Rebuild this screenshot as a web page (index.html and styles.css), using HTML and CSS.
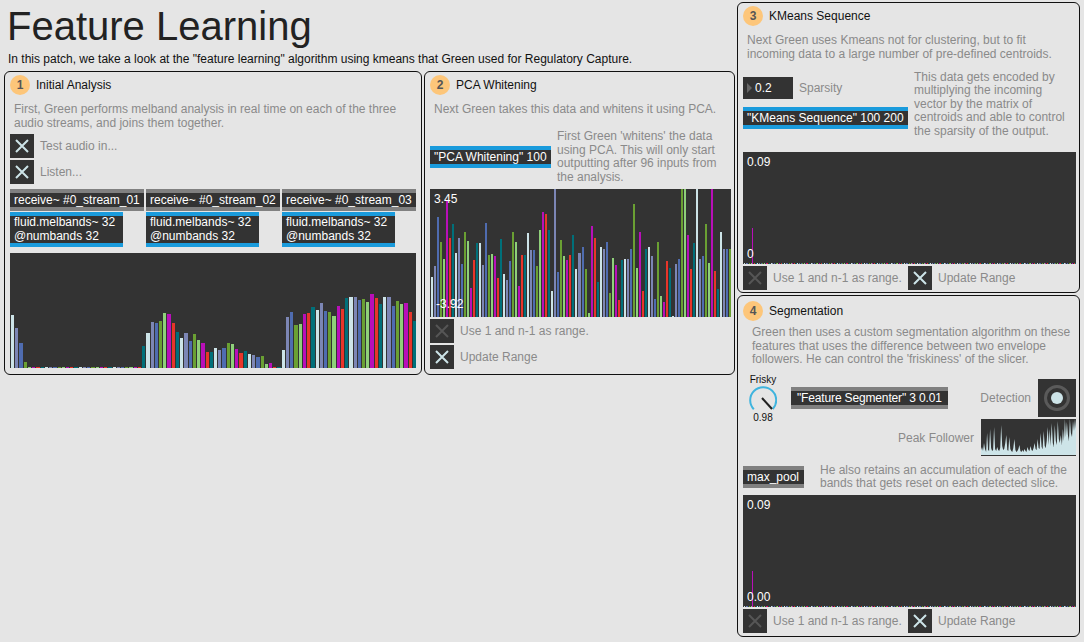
FILE: index.html
```html
<!DOCTYPE html>
<html lang="en">
<head>
    <meta charset="UTF-8">
    <meta name="viewport" content="width=device-width, initial-scale=1.0">
    <title>Feature Learning</title>
    <link rel="stylesheet" href="styles.css">
</head>
<body>
<div class="patch">
    <div class="left">
        <h1>Feature Learning</h1>
        <p class="intro">In this patch, we take a look at the "feature learning" algorithm using kmeans that Green used for Regulatory Capture.</p>

        <div class="panels">
            <section class="panel panel-analysis">
                <div class="head"><span class="badge">1</span>Initial Analysis</div>
                <p class="desc">First, Green performs melband analysis in real time on each of the three<br>audio streams, and joins them together.</p>
                <div class="toggle-row first">
                    <span class="toggle"><svg viewBox="0 0 24 24"><path d="M6 6L18 18M18 6L6 18"/></svg></span>
                    <span class="label">Test audio in...</span>
                </div>
                <div class="toggle-row">
                    <span class="toggle"><svg viewBox="0 0 24 24"><path d="M6 6L18 18M18 6L6 18"/></svg></span>
                    <span class="label">Listen...</span>
                </div>
                <div class="streams">
                    <div class="stream">
                        <div class="obj grey">receive~ #0_stream_01</div>
                        <div class="obj blue mel">fluid.melbands~ 32 @numbands 32</div>
                    </div>
                    <div class="stream">
                        <div class="obj grey">receive~ #0_stream_02</div>
                        <div class="obj blue mel">fluid.melbands~ 32 @numbands 32</div>
                    </div>
                    <div class="stream">
                        <div class="obj grey">receive~ #0_stream_03</div>
                        <div class="obj blue mel">fluid.melbands~ 32 @numbands 32</div>
                    </div>
                </div>
                <div class="chart chart-mel"><svg id="melChart"></svg></div>
            </section>

            <section class="panel panel-pca">
                <div class="head"><span class="badge">2</span>PCA Whitening</div>
                <p class="desc">Next Green takes this data and whitens it using PCA.</p>
                <div class="pca-row">
                    <div class="obj blue pca-msg">"PCA Whitening" 100</div>
                    <p class="note">First Green 'whitens' the data using PCA. This will only start outputting after 96 inputs from the analysis.</p>
                </div>
                <div class="chart chart-pca">
                    <svg id="pcaChart"></svg>
                    <span class="val val-top">3.45</span>
                    <span class="val val-low">-3.92</span>
                </div>
                <div class="toggle-row">
                    <span class="toggle off"><svg viewBox="0 0 24 24"><path d="M6 6L18 18M18 6L6 18"/></svg></span>
                    <span class="label">Use 1 and n-1 as range.</span>
                </div>
                <div class="toggle-row">
                    <span class="toggle"><svg viewBox="0 0 24 24"><path d="M6 6L18 18M18 6L6 18"/></svg></span>
                    <span class="label">Update Range</span>
                </div>
            </section>
        </div>
    </div>

    <div class="right">
        <section class="panel panel-kmeans">
            <div class="head"><span class="badge">3</span>KMeans Sequence</div>
            <p class="desc">Next Green uses Kmeans not for clustering, but to fit<br>incoming data to a large number of pre-defined centroids.</p>
            <div class="kmeans-row">
                <div class="kmeans-controls">
                    <div class="sparsity">
                        <span class="numbox"><i class="arrow"></i>0.2</span>
                        <span class="label">Sparsity</span>
                    </div>
                    <div class="obj blue">"KMeans Sequence" 100 200</div>
                </div>
                <p class="note">This data gets encoded by multiplying the incoming vector by the matrix of centroids and able to control the sparsity of the output.</p>
            </div>
            <div class="chart chart-seq">
                <svg id="seqChart"></svg>
                <span class="val val-top">0.09</span>
                <span class="val val-bottom">0</span>
            </div>
            <div class="range-row">
                <div class="toggle-row range-use">
                    <span class="toggle off"><svg viewBox="0 0 24 24"><path d="M6 6L18 18M18 6L6 18"/></svg></span>
                    <span class="label">Use 1 and n-1 as range.</span>
                </div>
                <div class="toggle-row">
                    <span class="toggle"><svg viewBox="0 0 24 24"><path d="M6 6L18 18M18 6L6 18"/></svg></span>
                    <span class="label">Update Range</span>
                </div>
            </div>
        </section>

        <section class="panel panel-seg">
            <div class="head"><span class="badge">4</span>Segmentation</div>
            <p class="desc seg-desc">Green then uses a custom segmentation algorithm on these<br>features that uses the difference between two envelope<br>followers. He can control the 'friskiness' of the slicer.</p>
            <div class="seg-mid">
                <div class="knob">
                    <span class="knob-name">Frisky</span>
                    <svg viewBox="0 0 28 26" width="28" height="26">
                        <path class="knob-arc" d="M4.8 23.2A13 13 0 1 1 23.8 23"/>
                        <path class="knob-needle" d="M13 12L23 23"/>
                    </svg>
                    <span class="knob-val">0.98</span>
                </div>
                <div class="obj grey seg-msg">"Feature Segmenter" 3 0.01</div>
                <div class="seg-line detect-line">
                    <span class="label">Detection</span>
                    <span class="bang"><svg viewBox="0 0 38 38" width="38" height="38"><circle class="bang-ring" cx="19" cy="19" r="11.5"/><circle class="bang-dot" cx="19" cy="19" r="6"/></svg></span>
                </div>
                <div class="seg-line peak-line">
                    <span class="label">Peak Follower</span>
                    <div class="peak"><svg id="peakChart" viewBox="0 0 95 36" preserveAspectRatio="none"></svg></div>
                </div>
            </div>
            <div class="pool-row">
                <div class="obj grey pool">max_pool</div>
                <p class="note">He also retains an accumulation of each of the bands that gets reset on each detected slice.</p>
            </div>
            <div class="chart chart-seq">
                <svg id="poolChart"></svg>
                <span class="val val-top">0.09</span>
                <span class="val val-bottom">0.00</span>
            </div>
            <div class="range-row">
                <div class="toggle-row range-use">
                    <span class="toggle off"><svg viewBox="0 0 24 24"><path d="M6 6L18 18M18 6L6 18"/></svg></span>
                    <span class="label">Use 1 and n-1 as range.</span>
                </div>
                <div class="toggle-row">
                    <span class="toggle"><svg viewBox="0 0 24 24"><path d="M6 6L18 18M18 6L6 18"/></svg></span>
                    <span class="label">Update Range</span>
                </div>
            </div>
        </section>
    </div>
</div>

<script src="charts.js"></script>
</body>
</html>
```

FILE: styles.css
```css
* {
    box-sizing: border-box;
}
body {
    margin: 0;
    background-color: #e5e5e5;
    font-family: "Liberation Sans", Arial, sans-serif;
    font-size: 12px;
    color: #222;
    overflow: hidden;
}
p {
    margin: 0;
}
.patch {
    display: flex;
    gap: 2px;
    padding: 2px 0 0 4px;
    height: 642px;
}
.left {
    width: 731px;
}
.right {
    width: 343px;
    display: flex;
    flex-direction: column;
    gap: 2px;
}
h1 {
    margin: 1px 0 0 3px;
    font-size: 40px;
    font-weight: normal;
    line-height: 46px;
    color: #222;
}
.intro {
    margin: 3px 0 5px 4px;
    line-height: 14px;
    color: #111;
}
.panels {
    display: flex;
    gap: 2px;
}
.panel {
    border: 1px solid #111;
    border-radius: 6px;
    padding: 3px 3px 5px 5px;
}
.panel-analysis {
    width: 418px;
    padding-right: 5px;
}
.panel-pca {
    width: 311px;
}
.panel-kmeans {
    padding-bottom: 2px;
    height: 291px;
}
.panel-seg {
    padding-top: 5px;
    padding-bottom: 3px;
    height: 342px;
}
.head {
    display: flex;
    align-items: center;
    gap: 6px;
    height: 20px;
    color: #111;
}
.badge {
    width: 20px;
    height: 20px;
    border-radius: 50%;
    background-color: #fdc67a;
    color: #555;
    font-weight: bold;
    text-align: center;
    line-height: 20px;
}
.desc {
    margin: 8px 0 0 4px;
    line-height: 13.5px;
    color: #8a8a8a;
}
.seg-desc {
    margin: 5px 0 0 9px;
}
.note {
    line-height: 13.5px;
    color: #8a8a8a;
}
.label {
    color: #8a8a8a;
    white-space: nowrap;
}
.toggle-row {
    display: flex;
    align-items: center;
    gap: 6px;
    margin-top: 2px;
}
.toggle-row.first {
    margin-top: 4px;
}
.toggle {
    display: block;
    width: 24px;
    height: 24px;
    background-color: #333;
    flex: none;
}
.toggle svg {
    display: block;
    fill: none;
    stroke: #cde4e8;
    stroke-width: 2;
}
.toggle.off svg {
    stroke: #565656;
}
.obj {
    background-color: #333;
    color: #fff;
    border-top: 4px solid;
    border-bottom: 4px solid;
    padding: 0 4px;
    line-height: 14px;
    white-space: nowrap;
}
.obj.grey {
    border-color: #808080;
}
.obj.blue {
    border-color: #1a9bdc;
}
.streams {
    display: flex;
    gap: 2px;
    margin-top: 5px;
}
.stream {
    width: 134px;
    display: flex;
    flex-direction: column;
    gap: 1px;
}
.obj.mel {
    width: 113px;
    white-space: normal;
    line-height: 13.5px;
}
.chart {
    position: relative;
    background-color: #333;
}
.chart svg {
    display: block;
    width: 100%;
    height: 100%;
}
.chart-mel {
    height: 115px;
    margin-top: 6px;
}
.chart-pca {
    height: 128px;
    margin-top: 5px;
}
.chart-seq {
    height: 112px;
}
.val {
    position: absolute;
    left: 4px;
    color: #fff;
    line-height: 14px;
}
.val-top {
    top: 3px;
}
.val-bottom {
    bottom: 3px;
}
.val-low {
    left: 6px;
    top: 108px;
}
.c0 { fill: #cde4e8; }
.c1 { fill: #7c86b5; }
.c2 { fill: #4f6cb0; }
.c3 { fill: #6aa033; }
.c4 { fill: #8fd07a; }
.c5 { fill: #b90fb9; }
.c6 { fill: #e8352a; }
.c7 { fill: #00707a; }
.pca-row {
    display: flex;
    align-items: center;
    gap: 6px;
    margin-top: 13.5px;
}
.pca-msg {
    width: 121px;
    flex: none;
}
.pca-row .note {
    height: 54px;
}
.kmeans-row {
    display: flex;
    align-items: flex-start;
    gap: 6px;
    margin-top: 9.5px;
    margin-bottom: 14px;
}
.kmeans-controls {
    width: 165px;
    flex: none;
    display: flex;
    flex-direction: column;
    gap: 8px;
    margin-top: 6.5px;
}
.sparsity {
    display: flex;
    align-items: center;
    gap: 6px;
}
.numbox {
    display: flex;
    align-items: center;
    width: 50px;
    height: 22px;
    background-color: #333;
    color: #fff;
    padding-left: 4px;
}
.arrow {
    width: 0;
    height: 0;
    margin-right: 3px;
    border-left: 5px solid #666;
    border-top: 5px solid transparent;
    border-bottom: 5px solid transparent;
}
.range-row {
    display: flex;
}
.range-use {
    width: 165px;
}
.seg-mid {
    display: grid;
    grid-template-columns: 48px 107px 50px 1fr;
    grid-template-rows: 46px 37px;
    margin-top: 6.5px;
}
.knob {
    grid-row: 1 / 3;
    width: 40px;
    display: flex;
    flex-direction: column;
    align-items: center;
    padding-top: 1px;
    color: #111;
}
.knob svg {
    display: block;
    fill: none;
}
.knob-name, .knob-val {
    font-size: 10px;
    line-height: 12px;
}
.knob-arc {
    stroke: #3fb4de;
    stroke-width: 2;
}
.knob-needle {
    stroke: #222;
    stroke-width: 2;
}
.seg-msg {
    grid-column: 2 / 4;
    align-self: start;
    margin-top: 14px;
    padding-left: 6px;
    letter-spacing: -0.15px;
}
.seg-line {
    display: flex;
    justify-content: flex-end;
    align-items: center;
    gap: 7px;
}
.detect-line {
    align-self: start;
    margin-top: 6px;
}
.peak-line {
    grid-column: 3 / 5;
    grid-row: 2;
}
.bang {
    display: block;
    width: 38px;
    height: 38px;
    background-color: #333;
}
.bang svg {
    display: block;
}
.bang-ring {
    fill: none;
    stroke: #5a5a5a;
    stroke-width: 3;
}
.bang-dot {
    fill: #cde4e8;
}
.peak {
    width: 95px;
    height: 37px;
    background-color: #333;
    flex: none;
}
.peak svg {
    display: block;
    width: 100%;
    height: 36px;
}
.peak polygon {
    fill: #cde4e8;
}
.pool-row {
    display: flex;
    align-items: center;
    gap: 16px;
    margin: 7.5px 0 4.5px;
}
.pool {
    width: 61px;
    flex: none;
}
```

FILE: charts.js
```js
const SVG_NS = 'http://www.w3.org/2000/svg';

const melHeights = [
    53, 40, 25, 6, 1, 1, 1, 1, 1, 1, 1, 1, 1, 1, 1, 1, 1, 1, 1, 1, 1, 1, 1, 1, 1, 1, 1, 1, 1, 1, 1, 22,
    35, 46, 45, 47, 55, 54, 45, 36, 30, 35, 27, 34, 28, 25, 16, 16, 20, 18, 20, 25, 24, 19, 15, 17, 14, 13, 11, 12, 4, 5, 1, 1,
    18, 51, 56, 43, 44, 54, 55, 61, 58, 65, 57, 56, 52, 62, 59, 70, 71, 71, 68, 69, 66, 74, 70, 64, 71, 71, 62, 67, 64, 65, 56, 47
];

const pcaHeights = [
    40, 51, 100, 75, 58, 116, 79, 93, 64, 79, 53, 85, 76, 29, 57, 74, 74, 52, 94, 62,
    63, 61, 39, 78, 43, 37, 56, 85, 75, 31, 62, 62, 84, 67, 67, 51, 87, 105, 103, 87,
    26, 128, 45, 77, 61, 57, 62, 82, 48, 64, 70, 48, 4, 91, 79, 35, 70, 68, 75, 24,
    59, 52, 17, 57, 58, 58, 68, 113, 49, 85, 26, 68, 70, 61, 18, 75, 21, 15, 56, 49,
    1, 53, 58, 128, 128, 82, 48, 74, 128, 58, 61, 93, 54, 128, 46, 28, 85, 68, 68, 68
];

const peakHeights = [
    5, 8, 4, 12, 6, 3, 22, 5, 4, 26, 7, 4, 5, 28, 6, 4, 8, 5, 4, 7,
    30, 9, 5, 6, 12, 20, 5, 4, 18, 6, 4, 3, 7, 16, 5, 3, 4, 6, 10, 4,
    3, 5, 3, 6, 4, 3, 8, 5, 4, 9, 5, 4, 7, 12, 6, 5, 16, 7, 6, 22,
    8, 6, 24, 9, 7, 14, 28, 10, 26, 9, 32, 12, 8, 30, 14, 10, 34, 16, 12, 20,
    10, 26, 14, 36, 18, 33, 20, 14, 36, 22, 18, 34, 24, 36, 26
];

function drawBars(id, heights, chartHeight) {
    const svg = document.getElementById(id);
    const width = svg.parentNode.clientWidth;
    const pitch = width / heights.length;
    svg.setAttribute('viewBox', `0 0 ${width} ${chartHeight}`);
    svg.setAttribute('shape-rendering', 'crispEdges');

    heights.forEach((h, i) => {
        const left = Math.round(i * pitch);
        const right = Math.round((i + 1) * pitch);
        const bar = document.createElementNS(SVG_NS, 'rect');
        bar.setAttribute('x', left + 1);
        bar.setAttribute('y', chartHeight - h);
        bar.setAttribute('width', Math.max(right - left - 1, 1));
        bar.setAttribute('height', h);
        bar.setAttribute('class', `c${i % 8}`);
        svg.appendChild(bar);
    });
}

// the kmeans output is flat apart from one active centroid
function flatHeights(count, index, value) {
    const heights = new Array(count).fill(1);
    heights[index] = value;
    return heights;
}

function drawPeak() {
    const svg = document.getElementById('peakChart');
    const step = 95 / (peakHeights.length - 1);
    const points = peakHeights.map((h, i) => `${(i * step).toFixed(1)},${36 - h}`);
    const shape = document.createElementNS(SVG_NS, 'polygon');
    shape.setAttribute('points', `0,36 ${points.join(' ')} 95,36`);
    svg.appendChild(shape);
}

drawBars('melChart', melHeights, 115);
drawBars('pcaChart', pcaHeights, 128);
drawBars('seqChart', flatHeights(200, 5, 36), 112);
drawBars('poolChart', flatHeights(200, 5, 36), 112);
drawPeak();
```
